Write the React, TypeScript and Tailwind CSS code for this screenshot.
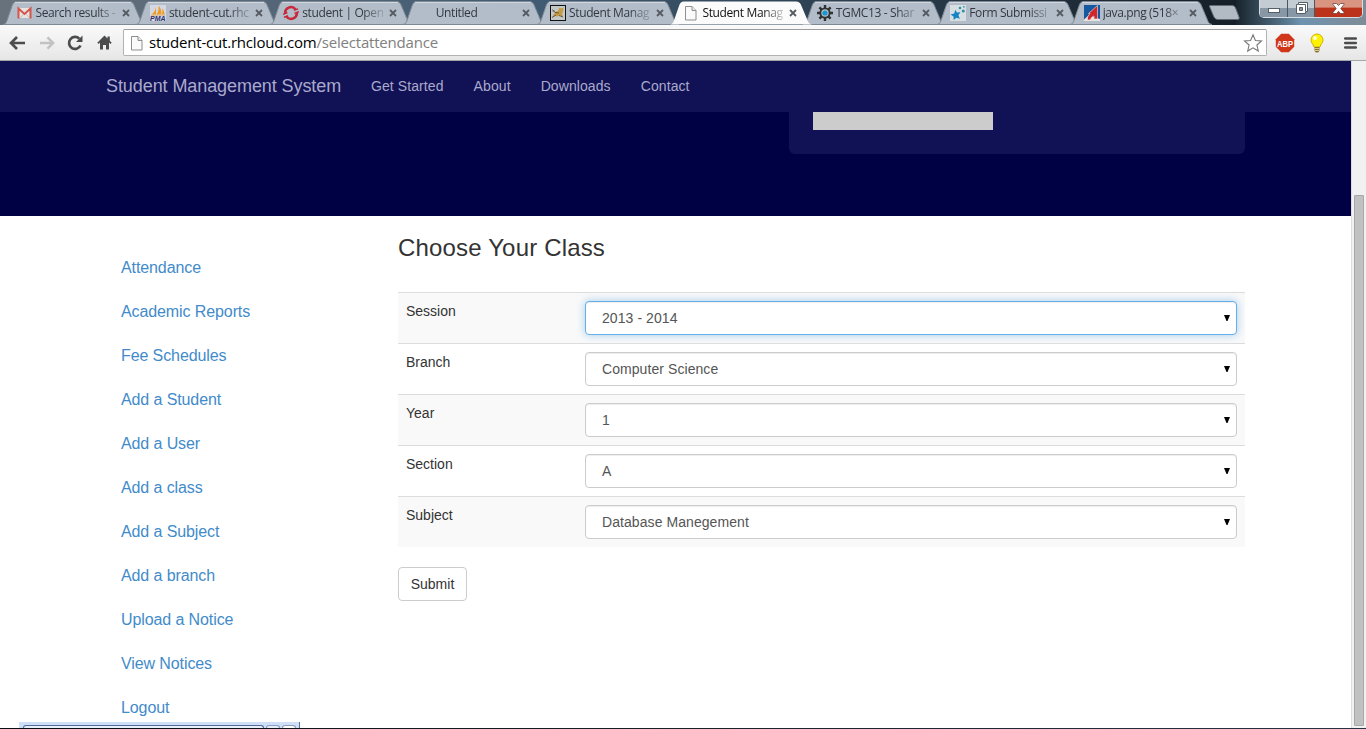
import React from "react";

const fadeText =
  "[mask-image:linear-gradient(to_right,black_60px,rgba(0,0,0,0.25)_80px)]";

function PageIcon() {
  return (
    <svg width="16" height="16" viewBox="0 0 16 16" className="block">
      <path d="M2.500 1.500h6.500l4 4v9.500h-10.500z" fill="#fafafa" stroke="#8e8e8e" />
      <path d="M9 1.500v4h4" fill="#e8e8e8" stroke="#8e8e8e" />
    </svg>
  );
}

function GmailIcon() {
  return (
    <svg width="16" height="16" viewBox="0 0 16 16" className="block">
      <path d="M1 3h13v10H1z" fill="#e6e3e0" />
      <path d="M3 13l5-5 5 5" fill="none" stroke="#c9c2bd" />
      <path d="M1.500 13.500V3.500L7.500 9l6-5.500V13.500" fill="none" stroke="#d5544b" strokeWidth="2" />
    </svg>
  );
}

function PmaIcon() {
  return (
    <svg width="16" height="16" viewBox="0 0 16 16" className="block">
      <rect width="16" height="16" fill="#d3d8e2" />
      <path d="M1.500 9.500C4 8 5.500 5 6 2v7.500zM6.500 9.500C8.500 7 9 3 8.500.5c2 2 3 5 3 9zM12 9.500c.5-2 .5-4 0-6 1.500 1.500 2.500 3.500 2.500 6z" fill="#f29a1c" />
      <path d="M1 10.200h14" stroke="#e9a94a" strokeWidth=".7" />
      <text x="0" y="16" fontSize="6.500" fontWeight="bold" fontStyle="italic" fill="#2d2f6b" fontFamily="Liberation Sans, sans-serif" textLength="15.500" lengthAdjust="spacingAndGlyphs">PMA</text>
    </svg>
  );
}

function OpenShiftIcon() {
  return (
    <svg width="16" height="16" viewBox="0 0 16 16" className="block">
      <path d="M2.300 9A5.800 5.800 0 0 1 12.600 4.400M13.700 7A5.800 5.800 0 0 1 3.400 11.600" fill="none" stroke="#c9283b" strokeWidth="2.500" />
      <path d="M0 9.200l4.500-1.600M11.500 8.400L16 6.800M11 5.400l4-1.500M1 12.300l4-1.500" stroke="#c9283b" strokeWidth="1.500" />
    </svg>
  );
}

function TomcatIcon() {
  return (
    <svg width="16" height="16" viewBox="0 0 16 16" className="block">
      <rect x=".5" y=".5" width="15" height="15" fill="#c3c8c8" stroke="#111" />
      <path d="M2 12.500l2-3.500 1-2 3-1 1.500-3.500 1.500 1 2.500-1-.3 4L12 8.500l1 3.500-3-1.500-3 1-2-.5z" fill="#c69b45" />
      <path d="M2.500 4.500l2.500 3M2 12.500l4-2.500M9 10.500l4 1.500M5 7.500l4 .5M2.500 6h2" stroke="#5b523e" strokeWidth=".9" />
    </svg>
  );
}

function GearIcon() {
  return (
    <svg width="16" height="16" viewBox="0 0 16 16" className="block">
      <g stroke="#2f3133" strokeWidth="2.400">
        <path d="M8 0v16M0 8h16M2.400 2.400l11.200 11.200M13.600 2.400L2.400 13.600" />
      </g>
      <circle cx="8" cy="8" r="5.600" fill="#2f3133" />
      <circle cx="8" cy="8" r="3.700" fill="#b9c4cc" />
      <circle cx="8" cy="8" r="2.600" fill="#1896cf" />
    </svg>
  );
}

function StarsIcon() {
  return (
    <svg width="16" height="16" viewBox="0 0 16 16" className="block">
      <rect width="16" height="16" fill="#d8dfe2" />
      <path d="M5.300 4.800l1.600 2.800 3.500-.3-2 2.900 1.500 3.500-3.500-1-2.800 2.300-.1-3.500L.5 9.500l3.700-1.100z" fill="#1583c4" />
      <circle cx="10" cy="3" r="1.300" fill="#2b9799" />
      <circle cx="13.300" cy="6" r="1.500" fill="#2b8fb0" />
      <rect x="13" y="1" width="1.700" height="1.700" fill="#49a9bb" />
    </svg>
  );
}

function JavaPngIcon() {
  return (
    <svg width="16" height="16" viewBox="0 0 16 16" className="block">
      <rect width="16" height="16" fill="#14589f" />
      <path d="M0 16v-1.500L5 10l4 2 7 2v2z" fill="#e8e3de" />
      <path d="M13.500.5V14h-3.500v-3L8 12l-2 3H3.500V12L6 8.500H4.500z" fill="#d1272c" stroke="#f3e9e6" strokeWidth=".6" />
    </svg>
  );
}

type TabInfo = { title: string; icon?: React.ReactNode; active?: boolean };

const tabs: TabInfo[] = [
  { title: "Search results -", icon: <GmailIcon /> },
  { title: "student-cut.rhc", icon: <PmaIcon /> },
  { title: "student | Open", icon: <OpenShiftIcon /> },
  { title: "Untitled" },
  { title: "Student Manag", icon: <TomcatIcon /> },
  { title: "Student Manag", icon: <PageIcon />, active: true },
  { title: "TGMC13 - Shar", icon: <GearIcon /> },
  { title: "Form Submissi", icon: <StarsIcon /> },
  { title: "java.png (518×", icon: <JavaPngIcon /> },
];

function Tab({ title, icon, active }: TabInfo) {
  return (
    <div className={`relative h-[25px] w-[133.4px] shrink-0 ${active ? "z-10" : ""}`}>
      <svg width="147" height="25" viewBox="0 0 147 25" className="absolute top-0 left-0">
        <path
          d="M0 24.500C3 24 3.500 22 4.500 19L9 6C10 3 11 1.500 14 1.500H126C129 1.500 130.500 3 131.500 6L137 19C138 22 139 24 142 24.500Z"
          fill={active ? "#fbfbfb" : "#b3bdc9"}
          stroke={active ? "none" : "#7f8994"}
        />
        {!active && <path d="M12 2.500H128" stroke="#d0d7df" />}
      </svg>
      <div className="relative flex h-full items-center pt-px pl-[13.500px]">
        <span className="w-4 shrink-0">{icon}</span>
        <span
          className={`ml-[3px] w-[81px] shrink-0 text-[12px] tracking-[-0.38px] whitespace-nowrap ${fadeText} ${active ? "text-[#111]" : "text-[#33383f]"}`}
        >
          {title}
        </span>
        <svg width="8" height="8" viewBox="0 0 8 8" className="ml-[5.500px] shrink-0">
          <path d="M1 1l6 6M7 1L1 7" stroke="#555b61" strokeWidth="1.800" />
        </svg>
      </div>
    </div>
  );
}

function WindowControls() {
  return (
    <div className="absolute top-0 right-[3px] flex h-[18px] w-[104px] overflow-hidden rounded-b-[5px] border border-t-0 border-[#d5dce2]">
      <div className="flex w-[28px] items-center justify-center border-r border-[#4b5660] bg-linear-to-b from-[#c3cbd3] from-45% to-[#8797a5] to-50%">
        <svg width="12" height="6" viewBox="0 0 12 6" className="mt-1">
          <rect x=".5" y=".5" width="11" height="4" fill="#fff" stroke="#565e66" />
        </svg>
      </div>
      <div className="flex w-[27px] items-center justify-center border-r border-[#4b5660] bg-linear-to-b from-[#c3cbd3] from-45% to-[#8797a5] to-50%">
        <svg width="13" height="13" viewBox="0 0 13 13" className="-mt-px">
          <path d="M3.500.5h9v9h-2v2h-9v-9h2z" fill="#fff" stroke="#565e66" />
          <path d="M4.500 5.500h3v3h-3z" fill="#8c9aa7" stroke="#565e66" />
          <path d="M4 2.500h6.500V9" fill="none" stroke="#565e66" />
        </svg>
      </div>
      <div className="flex flex-1 items-center justify-center bg-linear-to-b from-[#d99482] from-40% to-[#bb331a] to-50%">
        <svg width="13" height="11" viewBox="0 0 13 11" className="-mt-px">
          <path d="M1 .5h3.500l2 2 2-2H12v1L8.800 5.500 12 9.500v1H8.500l-2-2.200-2 2.200H1v-1l3.200-4L1 1.500z" fill="#fff" stroke="#6a4440" strokeWidth=".8" />
        </svg>
      </div>
    </div>
  );
}

function TabStrip() {
  return (
    <div className="relative h-[25px] shrink-0 bg-linear-to-r from-[#68727c] via-[#3f5a72] via-40% to-[#0e151c]">
      <div className="absolute right-0 bottom-0 h-[25px] w-[130px] bg-linear-to-r from-[#18242d] via-[#6f93af] via-50% to-[#7e8c98]" />
      <div className="relative flex pl-[3px]">
        {tabs.map((t, i) => (
          <Tab key={i} {...t} />
        ))}
        <svg width="34" height="17" viewBox="0 0 34 17" className="mt-[5px] ml-1">
          <path d="M1.500 1.500C1 .5 2 .5 3 .5H24C26 .5 27 1.500 28 4L31 12C31.500 14 31 14.500 29 14.500H10C8 14.500 6.500 13.500 5.500 11Z" fill="#b2bac4" stroke="#606a74" />
        </svg>
      </div>
      <WindowControls />
    </div>
  );
}

function Toolbar() {
  return (
    <div className="flex h-[36px] shrink-0 items-center border-b border-[#a6a6a6] bg-linear-to-b from-[#fafafa] to-[#e6e6e6]">
      <div className="flex items-center pl-[9px]">
        <svg width="17" height="14" viewBox="0 0 17 14">
          <path d="M8 1L2 7l6 6M2 7h14" fill="none" stroke="#4c4c4c" strokeWidth="2.700" />
        </svg>
        <svg width="16" height="14" viewBox="0 0 17 14" className="ml-[13px]">
          <path d="M9 1l6 6-6 6M15 7H1" fill="none" stroke="#c2c2c2" strokeWidth="2.700" />
        </svg>
        <svg width="16" height="16" viewBox="0 0 16 16" className="ml-[12px]">
          <path d="M13.500 10.500A6 6 0 1 1 12.300 3.700" fill="none" stroke="#4c4c4c" strokeWidth="2.700" />
          <path d="M15.500.5v6.500H9z" fill="#4c4c4c" />
        </svg>
        <svg width="15" height="15" viewBox="0 0 15 15" className="ml-[14px]">
          <path d="M7.500.5L.3 7.700l1.200 1.200L3 7.500V14.500h3V10h3v4.500h3V7.500l1.500 1.400 1.200-1.200L12.800 5.800V1.500h-2.300v2z" fill="#4c4c4c" />
        </svg>
      </div>
      <div className="ml-[11px] flex h-[27px] w-[1144px] items-center rounded-[2px] border border-[#b2b2b2] border-t-[#9c9c9c] bg-white pl-[5px] text-[15px] text-[#808080]">
        <PageIcon />
        <span className="ml-1 flex-1 tracking-[-0.2px] whitespace-nowrap">
          <span className="text-black">student-cut.rhcloud.com</span>/selectattendance
        </span>
        <svg width="20" height="20" viewBox="0 0 20 20" className="mr-[3px]">
          <path d="M10 1.800l2.400 5.700 6.100.5-4.600 4 1.400 6-5.300-3.200L4.700 18l1.400-6-4.600-4 6.100-.5z" fill="#fff" stroke="#777" strokeWidth="1.100" />
        </svg>
      </div>
      <svg width="20" height="20" viewBox="0 0 20 20" className="ml-2 overflow-visible">
        <path d="M6.200.8h7.600l5.400 5.400v7.600l-5.400 5.400H6.200L.8 13.800V6.200z" fill="#d0361a" />
        <text x="2" y="13.500" fontSize="9.500" fontWeight="bold" fill="#fff" fontFamily="Liberation Sans, sans-serif" textLength="16" lengthAdjust="spacingAndGlyphs">ABP</text>
      </svg>
      <svg width="14" height="20" viewBox="0 0 14 20" className="ml-[15px]">
        <path d="M7 1a6 6 0 0 1 6 6c0 3-2.500 4-3 7H4C3.500 11 1 10 1 7a6 6 0 0 1 6-6z" fill="#fff200" stroke="#d0b200" />
        <circle cx="5" cy="5" r="2" fill="#fffde0" />
        <path d="M4.500 14h5v4L8 19.500H6L4.500 18z" fill="#8b7430" />
        <path d="M4.500 15.500h5M4.500 17.500h5" stroke="#d9c88b" />
      </svg>
      <svg width="13" height="14" viewBox="0 0 13 14" className="ml-[20px]">
        <path d="M1.200 2.500h10.600M1.200 7h10.600M1.200 11.500h10.600" stroke="#4c4c4c" strokeWidth="2.500" strokeLinecap="round" />
      </svg>
    </div>
  );
}

const navLinks = ["Get Started", "About", "Downloads", "Contact"];
const menu = [
  "Attendance",
  "Academic Reports",
  "Fee Schedules",
  "Add a Student",
  "Add a User",
  "Add a class",
  "Add a Subject",
  "Add a branch",
  "Upload a Notice",
  "View Notices",
  "Logout",
];
const fields = [
  { label: "Session", value: "2013 - 2014", focused: true },
  { label: "Branch", value: "Computer Science" },
  { label: "Year", value: "1" },
  { label: "Section", value: "A" },
  { label: "Subject", value: "Database Manegement" },
];

function Header() {
  return (
    <header className="h-[155px] shrink-0 bg-[#000044]">
      <nav className="flex h-[51px] items-center bg-[#111155] pl-[106px] text-[14px] text-[#aaaacc]">
        <span className="w-[265px] text-[18px] tracking-[-0.08px]">Student Management System</span>
        <div className="flex gap-[30px] tracking-[0.09px]">
          {navLinks.map((l) => (
            <a key={l}>{l}</a>
          ))}
        </div>
      </nav>
      <div className="ml-[789px] h-[42px] w-[456px] rounded-b-[6px] bg-[#111155] pl-6">
        <div className="h-[18px] w-[180px] bg-[#cccccc]" />
      </div>
    </header>
  );
}

function SelectBox({ value, focused }: { value: string; focused?: boolean }) {
  return (
    <div
      className={`flex h-[34px] w-[652px] items-center justify-between rounded-[4px] border bg-white pr-[6px] pl-4 text-[14px] tracking-[0.07px] text-[#555] ${
        focused
          ? "border-[#66afe9] shadow-[inset_0_1px_1px_rgba(0,0,0,0.075),0_0_8px_rgba(102,175,233,0.6)]"
          : "border-[#ccc] shadow-[inset_0_1px_1px_rgba(0,0,0,0.075)]"
      }`}
    >
      {value}
      <svg width="6" height="6" viewBox="0 0 6 6">
        <path d="M0 0h6L3.500 6h-1z" fill="#000" />
      </svg>
    </div>
  );
}

function Content() {
  return (
    <main className="flex min-h-0 flex-1 pl-[121px]">
      <ul className="w-[277px] pt-[30px] text-[16px] tracking-[-0.1px] text-[#428bca]">
        {menu.map((m) => (
          <li key={m} className="flex h-11 items-center">
            {m}
          </li>
        ))}
      </ul>
      <section className="w-[847px] text-[14px] text-[#333]">
        <h1 className="mt-[18px] mb-[31px] text-[24px] leading-[27px] tracking-[0.17px]">Choose Your Class</h1>
        <div>
          {fields.map((f) => (
            <div key={f.label} className="flex h-[51px] border-t border-[#ddd] p-2 odd:bg-[#f9f9f9]">
              <span className="w-[179px] leading-5">{f.label}</span>
              <SelectBox value={f.value} focused={f.focused} />
            </div>
          ))}
        </div>
        <button className="mt-5 h-[34px] w-[69px] rounded-[4px] border border-[#ccc] bg-white">Submit</button>
      </section>
    </main>
  );
}

export default function App() {
  return (
    <div className="relative flex h-[729px] w-[1366px] flex-col overflow-hidden bg-white font-['Open_Sans','Noto_Sans',sans-serif]">
      <TabStrip />
      <Toolbar />
      <div className="flex min-h-0 flex-1 font-['Liberation_Sans',Arial,sans-serif]">
        <div className="flex w-[1351px] flex-col overflow-hidden">
          <Header />
          <Content />
        </div>
        <div className="w-[15px] border-l border-[#dcdcdc] bg-[#f1f1f1] pt-[134px] pl-[2px]">
          <div className="h-[531px] w-[10px] rounded-[1px] border border-[#a8a8a8] bg-[#c1c1c1]" />
        </div>
      </div>
      <div className="absolute bottom-0 left-0 h-[7px] w-full">
        <div className="ml-[19px] flex h-[6px] w-[281px] items-end border-r border-[#5b6f99] bg-[#cfdff8] pl-1">
          <div className="h-[3px] w-[241px] rounded-t-[5px] border border-b-0 border-[#526b9b] bg-[#e8f0fb]" />
          <div className="ml-[2px] h-[3px] w-[14px] rounded-t-[5px] border border-b-0 border-[#8c9cbc] bg-[#e8f0fb]" />
          <div className="ml-[2px] h-[3px] w-[14px] rounded-t-[5px] border border-b-0 border-[#8c9cbc] bg-white" />
        </div>
        <div className="h-px bg-linear-to-r from-[#0b0d12] to-[#253446]" />
      </div>
    </div>
  );
}
